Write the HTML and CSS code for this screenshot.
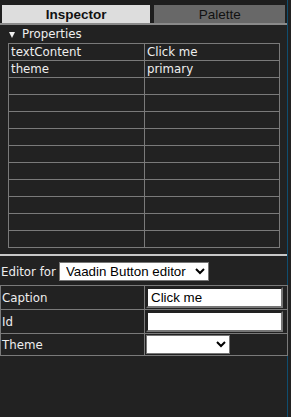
FILE: index.html
```html
<!DOCTYPE html>
<html>
<head>
<meta charset="utf-8">
<link rel="stylesheet" href="styles.css">
</head>
<body>
<div class="panel">
  <div class="tabs">
    <div class="tab tab-active">Inspector</div>
    <div class="tab tab-inactive">Palette</div>
  </div>
  <div class="section-title"><span class="tri"></span>Properties</div>
  <table class="props">
    <tr><td>textContent</td><td>Click me</td></tr>
    <tr><td>theme</td><td>primary</td></tr>
    <tr><td></td><td></td></tr>
    <tr><td></td><td></td></tr>
    <tr><td></td><td></td></tr>
    <tr><td></td><td></td></tr>
    <tr><td></td><td></td></tr>
    <tr><td></td><td></td></tr>
    <tr><td></td><td></td></tr>
    <tr><td></td><td></td></tr>
    <tr><td></td><td></td></tr>
    <tr><td></td><td></td></tr>
  </table>
  <div class="separator"></div>
  <div class="editor-for">
    <span>Editor for</span>
    <select class="editor-select"><option>Vaadin Button editor</option></select>
  </div>
  <table class="editor">
    <tr><td class="label">Caption</td><td class="value"><input class="text-input" type="text" value="Click me"></td></tr>
    <tr><td class="label">Id</td><td class="value"><input class="text-input" type="text" value=""></td></tr>
    <tr class="last"><td class="label">Theme</td><td class="value"><select class="theme-select"><option></option></select></td></tr>
  </table>
</div>
</body>
</html>
```
FILE: styles.css
```css
html, body {
  margin: 0;
  padding: 0;
  background: #222222;
}
body {
  font-family: "DejaVu Sans", sans-serif;
  font-size: 11.8px;
  color: #eeeeee;
}
.panel {
  width: 288px;
  min-height: 417px;
  box-sizing: border-box;
  border-right: 1px solid #0f4d6f;
  background: #222222;
}
.tabs {
  display: flex;
  padding: 5px 2px 0 2px;
  gap: 4px;
  border-bottom: 2px solid #8a8a8a;
  width: 287px;
  box-sizing: border-box;
  background: #1e1e1e;
}
.tab {
  height: 18px;
  line-height: 19px;
  text-align: center;
  font-family: "Liberation Sans", Arial, sans-serif;
  font-size: 13.5px;
}
.tab-active {
  width: 149px;
  background: #dddddd;
  color: #111111;
  font-weight: bold;
}
.tab-inactive {
  width: 131px;
  background: #686868;
  color: #111111;
}
.section-title {
  height: 18px;
  line-height: 19px;
  padding-left: 9px;
  display: flex;
  align-items: center;
}
.tri {
  display: inline-block;
  width: 0;
  height: 0;
  border-left: 3px solid transparent;
  border-right: 3px solid transparent;
  border-top: 6px solid #eeeeee;
  margin-right: 7px;
  margin-top: 1px;
}
.props {
  margin-left: 8px;
  width: 272px;
  border-collapse: collapse;
  table-layout: fixed;
}
.props tr {
  height: 17px;
}
.props td {
  border: 1px solid #7a7a7a;
  padding: 0 2px;
  line-height: 15px;
  white-space: nowrap;
}
.props td:first-child {
  width: 131px;
}
.separator {
  margin-top: 6px;
  width: 287px;
  height: 2px;
  background: #c8c8c8;
}
.editor-for {
  display: flex;
  align-items: center;
  gap: 3px;
  padding-left: 1px;
  margin-top: 6px;
  height: 19px;
}
.editor-select {
  font-family: "Liberation Sans", Arial, sans-serif;
  font-size: 13.333px;
  width: 150px;
  height: 19px;
  background: #ffffff;
  color: #000000;
  border: 1px solid #767676;
  padding: 0 2px;
}
.editor {
  margin-top: 4px;
  width: 288px;
  border-collapse: collapse;
  table-layout: fixed;
}
.editor tr {
  height: 24px;
}
.editor tr.last {
  height: 22px;
}
.editor td {
  border: 1px solid #7a7a7a;
  padding: 1px;
}
.editor td.label {
  width: 141px;
}
.text-input {
  display: block;
  font-family: "Liberation Sans", Arial, sans-serif;
  font-size: 13.333px;
  width: 137px;
  height: 21px;
  box-sizing: border-box;
  border: 2px inset #767676;
  background: #ffffff;
  color: #000000;
  padding: 1px 3px;
  margin: 0;
}
.theme-select {
  display: block;
  font-family: "Liberation Sans", Arial, sans-serif;
  font-size: 13.333px;
  width: 84px;
  height: 19px;
  background: #ffffff;
  color: #000000;
  border: 1px solid #767676;
  margin: 0;
}
```
